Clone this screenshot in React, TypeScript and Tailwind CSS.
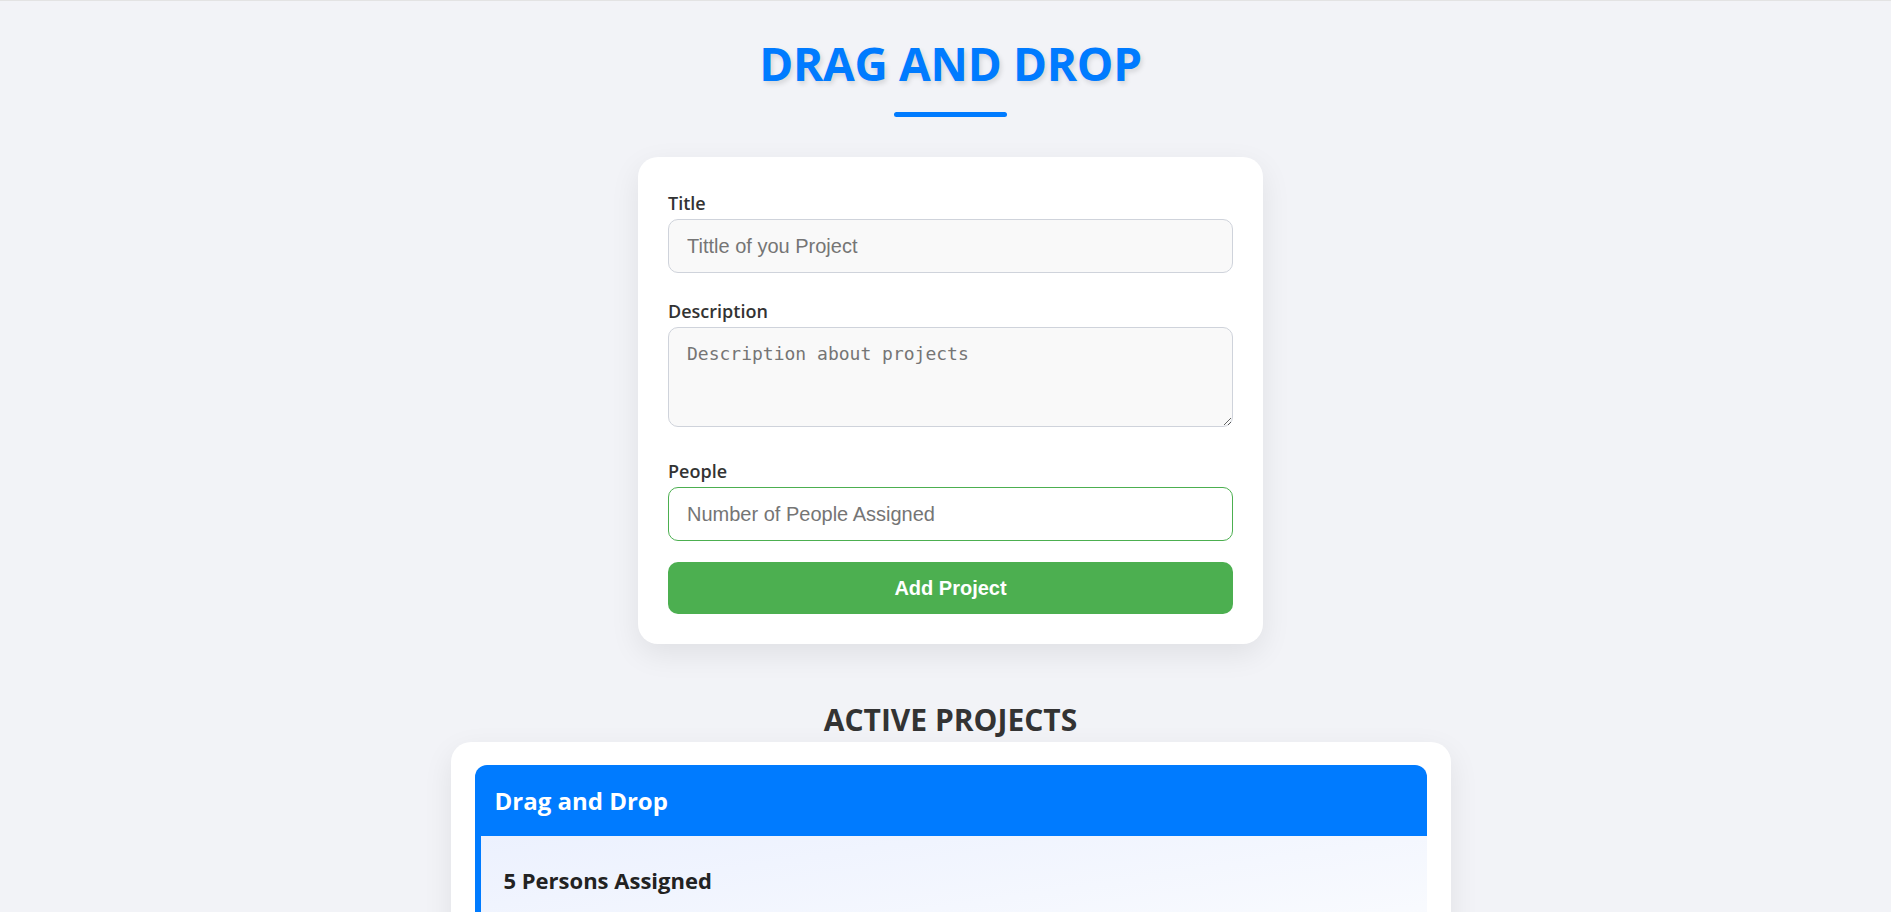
import React from 'react';

const label = "block text-[18px] leading-6 font-semibold text-[#333] mb-[4px] [font-family:'Open_Sans',sans-serif]";
const field =
  "block w-full rounded-[10px] border px-[18px] text-[20px] text-[#333] outline-none placeholder:text-[#757575] [font-family:'Liberation_Sans',Arial,sans-serif]";

const ProjectForm: React.FC = () => {
  return (
    <form
      className="mx-auto mt-10 w-[625px] rounded-[20px] bg-white px-[30px] pt-[34px] pb-[30px] shadow-[0_10px_30px_rgba(0,0,0,0.08)]"
      onSubmit={(e) => e.preventDefault()}
    >
      <label htmlFor="title" className={label}>Title</label>
      <input
        id="title"
        type="text"
        placeholder="Tittle of you Project"
        className={`${field} h-[54px] border-[#cfd3db] bg-[#f9f9f9]`}
      />

      <label htmlFor="description" className={`${label} mt-[26px]`}>Description</label>
      <textarea
        id="description"
        placeholder="Description about projects"
        className="block h-[100px] w-full rounded-[10px] border border-[#cfd3db] bg-[#f9f9f9] px-[18px] pt-[12px] text-[18px] text-[#333] outline-none placeholder:text-[#757575] [font-family:'DejaVu_Sans_Mono',monospace]"
      />

      <label htmlFor="people" className={`${label} mt-[32px]`}>People</label>
      <input
        id="people"
        type="number"
        placeholder="Number of People Assigned"
        className={`${field} h-[54px] border-[#4caf50] bg-white [appearance:textfield]`}
      />

      <button
        type="submit"
        className="mt-[21px] h-[52px] w-full rounded-[10px] bg-[#4caf50] text-[20px] font-bold text-white [font-family:'Liberation_Sans',Arial,sans-serif]"
      >
        Add Project
      </button>
    </form>
  );
};

const ProjectList: React.FC = () => {
  return (
    <section className="mt-[58px]">
      <h2 className="text-center text-[30px] leading-9 font-bold text-[#333] mb-[4px] [font-family:'Open_Sans',sans-serif]">
        ACTIVE PROJECTS
      </h2>
      <div className="mx-auto w-[1000px] rounded-[20px] bg-white px-6 pt-[23px] pb-6 shadow-[0_10px_30px_rgba(0,0,0,0.08)]">
        <div className="[font-family:'Open_Sans',sans-serif]">
          <header className="flex h-[71px] items-center rounded-t-[12px] bg-[#007bff] px-5">
            <h3 className="text-[24px] font-bold text-white">Drag and Drop</h3>
          </header>
          <div className="border-l-[6px] border-[#007bff] bg-linear-to-br from-[#ecf1fe] to-[#fcfdfe] px-[23px] pt-[30px] pb-10">
            <h4 className="text-[22px] leading-7 font-bold text-[#222]">5 Persons Assigned</h4>
            <p className="mt-4 text-[17px] text-[#555]">Description about projects</p>
          </div>
        </div>
      </div>
    </section>
  );
};

const App: React.FC = () => {
  return (
    <div className="min-h-screen border-t border-[#e3e3e3] bg-[#f2f3f7] pl-[10px] pt-[34px] pb-20">
      <div className="flex flex-col items-center">
        <h1 className="text-[46px] leading-[56px] font-bold tracking-[-0.3px] text-[#007bff] [font-family:'Open_Sans',sans-serif] [text-shadow:2px_3px_5px_rgba(0,0,0,0.12)]">
          DRAG AND DROP
        </h1>
        <div className="mt-[21px] h-[5px] w-[113px] rounded-full bg-[#007bff]" />
      </div>
      <ProjectForm />
      <ProjectList />
    </div>
  );
};

export default App;
